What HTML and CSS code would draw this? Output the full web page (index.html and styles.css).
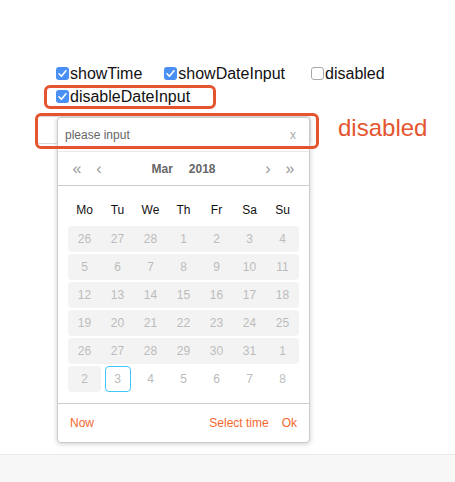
FILE: index.html
```html
<!DOCTYPE html>
<html>
<head>
<meta charset="utf-8">
<link rel="stylesheet" href="styles.css">
</head>
<body>
<div class="page">
  <div class="options">
    <div class="row">
      <label class="opt"><span class="cb on"><svg viewBox="0 0 13 13" width="13" height="13"><polyline points="3,6.8 5.4,9.2 10,3.8" fill="none" stroke="#fff" stroke-width="1.6" stroke-linecap="round" stroke-linejoin="round"/></svg></span>showTime</label>
      <label class="opt"><span class="cb on"><svg viewBox="0 0 13 13" width="13" height="13"><polyline points="3,6.8 5.4,9.2 10,3.8" fill="none" stroke="#fff" stroke-width="1.6" stroke-linecap="round" stroke-linejoin="round"/></svg></span>showDateInput</label>
      <label class="opt wide"><span class="cb"></span>disabled</label>
    </div>
    <div class="row">
      <label class="opt marked"><span class="cb on"><svg viewBox="0 0 13 13" width="13" height="13"><polyline points="3,6.8 5.4,9.2 10,3.8" fill="none" stroke="#fff" stroke-width="1.6" stroke-linecap="round" stroke-linejoin="round"/></svg></span>disableDateInput<span class="ring ring-sm"></span></label>
    </div>
  </div>

  <div class="picker-row">
    <div class="field">
      <div class="base-input"></div>
      <div class="ring ring-lg"></div>
      <div class="calendar">
        <div class="cal-input">
          <span class="placeholder">please input</span>
          <span class="clear">x</span>
        </div>
        <div class="cal-head">
          <span class="nav">«</span>
          <span class="nav">‹</span>
          <span class="title"><span class="sel">Mar</span><span class="sel">2018</span></span>
          <span class="nav">›</span>
          <span class="nav">»</span>
        </div>
        <div class="cal-body">
          <div class="weekdays">
            <span>Mo</span><span>Tu</span><span>We</span><span>Th</span><span>Fr</span><span>Sa</span><span>Su</span>
          </div>
          <div class="week">
            <span class="d off first">26</span><span class="d off">27</span><span class="d off">28</span><span class="d off">1</span><span class="d off">2</span><span class="d off">3</span><span class="d off last">4</span>
          </div>
          <div class="week">
            <span class="d off first">5</span><span class="d off">6</span><span class="d off">7</span><span class="d off">8</span><span class="d off">9</span><span class="d off">10</span><span class="d off last">11</span>
          </div>
          <div class="week">
            <span class="d off first">12</span><span class="d off">13</span><span class="d off">14</span><span class="d off">15</span><span class="d off">16</span><span class="d off">17</span><span class="d off last">18</span>
          </div>
          <div class="week">
            <span class="d off first">19</span><span class="d off">20</span><span class="d off">21</span><span class="d off">22</span><span class="d off">23</span><span class="d off">24</span><span class="d off last">25</span>
          </div>
          <div class="week">
            <span class="d off first">26</span><span class="d off">27</span><span class="d off">28</span><span class="d off">29</span><span class="d off">30</span><span class="d off">31</span><span class="d off last">1</span>
          </div>
          <div class="week">
            <span class="d off first last">2</span><span class="d"><span class="today">3</span></span><span class="d">4</span><span class="d">5</span><span class="d">6</span><span class="d">7</span><span class="d">8</span>
          </div>
        </div>
        <div class="cal-foot">
          <span>Now</span>
          <span class="spacer"></span>
          <span>Select time</span>
          <span class="ok">Ok</span>
        </div>
      </div>
    </div>
    <span class="note">disabled</span>
  </div>
</div>
<div class="band"></div>
</body>
</html>
```

FILE: styles.css
```css
html, body {
  margin: 0;
  padding: 0;
  background: #fff;
}

body {
  font-family: "Liberation Sans", Helvetica, Arial, sans-serif;
  color: #111;
}

.page {
  height: 454px;
  box-sizing: border-box;
  padding: 62px 0 0 56px;
}

.options {
  font-size: 16px;
}

.row {
  display: flex;
  gap: 22px;
  height: 23px;
  line-height: 23px;
}

.opt {
  display: inline-flex;
  align-items: center;
  position: relative;
}

.opt.wide {
  margin-left: 4px;
}

.cb {
  width: 13px;
  height: 13px;
  box-sizing: border-box;
  border-radius: 3px;
  margin-right: 1px;
  border: 1px solid #a8a8a8;
  background: #fff;
  display: inline-flex;
}

.cb.on {
  border: none;
  background: #4a8ff4;
}

.ring {
  position: absolute;
  box-sizing: border-box;
  border: 3px solid #e4552f;
  border-radius: 6px;
  pointer-events: none;
}

.ring-sm {
  left: -12px;
  top: 0;
  width: 172px;
  height: 24px;
}

.picker-row {
  display: flex;
  align-items: flex-start;
  margin-top: 8px;
  margin-left: -20px;
}

.field {
  position: relative;
  width: 275px;
  height: 28px;
  flex: none;
}

.base-input {
  height: 100%;
  box-sizing: border-box;
  border: 1px solid #d9d9d9;
  border-radius: 3px;
  background: #fff;
}

.ring-lg {
  left: -1px;
  top: -3px;
  width: 284px;
  height: 36px;
  z-index: 2;
}

.note {
  margin-left: 27px;
  margin-top: -2px;
  font-size: 24px;
  line-height: 28px;
  color: #e4552f;
}

.calendar {
  position: absolute;
  left: 21px;
  top: 1px;
  z-index: 1;
  width: 253px;
  box-sizing: border-box;
  border: 1px solid #ccc;
  border-radius: 4px;
  box-shadow: 0 1px 5px #ccc;
  background: #fff;
  font-size: 12px;
}

.cal-input {
  display: flex;
  align-items: center;
  height: 33px;
  border-bottom: 1px solid #e9e9e9;
  padding: 0 6px 0 7px;
}

.placeholder {
  flex: 1;
  color: #666;
}

.clear {
  width: 20px;
  text-align: center;
  color: #aaa;
}

.cal-head {
  display: flex;
  align-items: center;
  height: 33px;
  border-bottom: 1px solid #ccc;
  padding: 0 8px;
}

.nav {
  width: 22px;
  text-align: center;
  color: #999;
  font-size: 16px;
}

.title {
  flex: 1;
  text-align: center;
  font-weight: bold;
  color: #666;
}

.sel {
  padding: 0 8px;
}

.cal-body {
  padding: 9px 10px 10px;
}

.weekdays {
  display: grid;
  grid-template-columns: repeat(7, 1fr);
  height: 30px;
  line-height: 30px;
  text-align: center;
  color: #111;
}

.week {
  display: grid;
  grid-template-columns: repeat(7, 1fr);
  padding: 1px 0;
}

.d {
  height: 26px;
  line-height: 26px;
  text-align: center;
  color: #bbb;
  display: flex;
  justify-content: center;
}

.d.off {
  background: #f3f3f3;
  color: #bcbcbc;
}

.d.first {
  border-top-left-radius: 4px;
  border-bottom-left-radius: 4px;
}

.d.last {
  border-top-right-radius: 4px;
  border-bottom-right-radius: 4px;
}

.today {
  width: 26px;
  height: 26px;
  box-sizing: border-box;
  border: 1px solid #3fc7fa;
  border-radius: 4px;
  line-height: 24px;
}

.cal-foot {
  display: flex;
  border-top: 1px solid #ccc;
  padding: 10px 12px;
  line-height: 18px;
  color: #f46830;
}

.spacer {
  flex: 1;
}

.ok {
  margin-left: 13px;
}

.band {
  height: 27px;
  border-top: 1px solid #e9e9e9;
  background: #f7f7f7;
}
```
